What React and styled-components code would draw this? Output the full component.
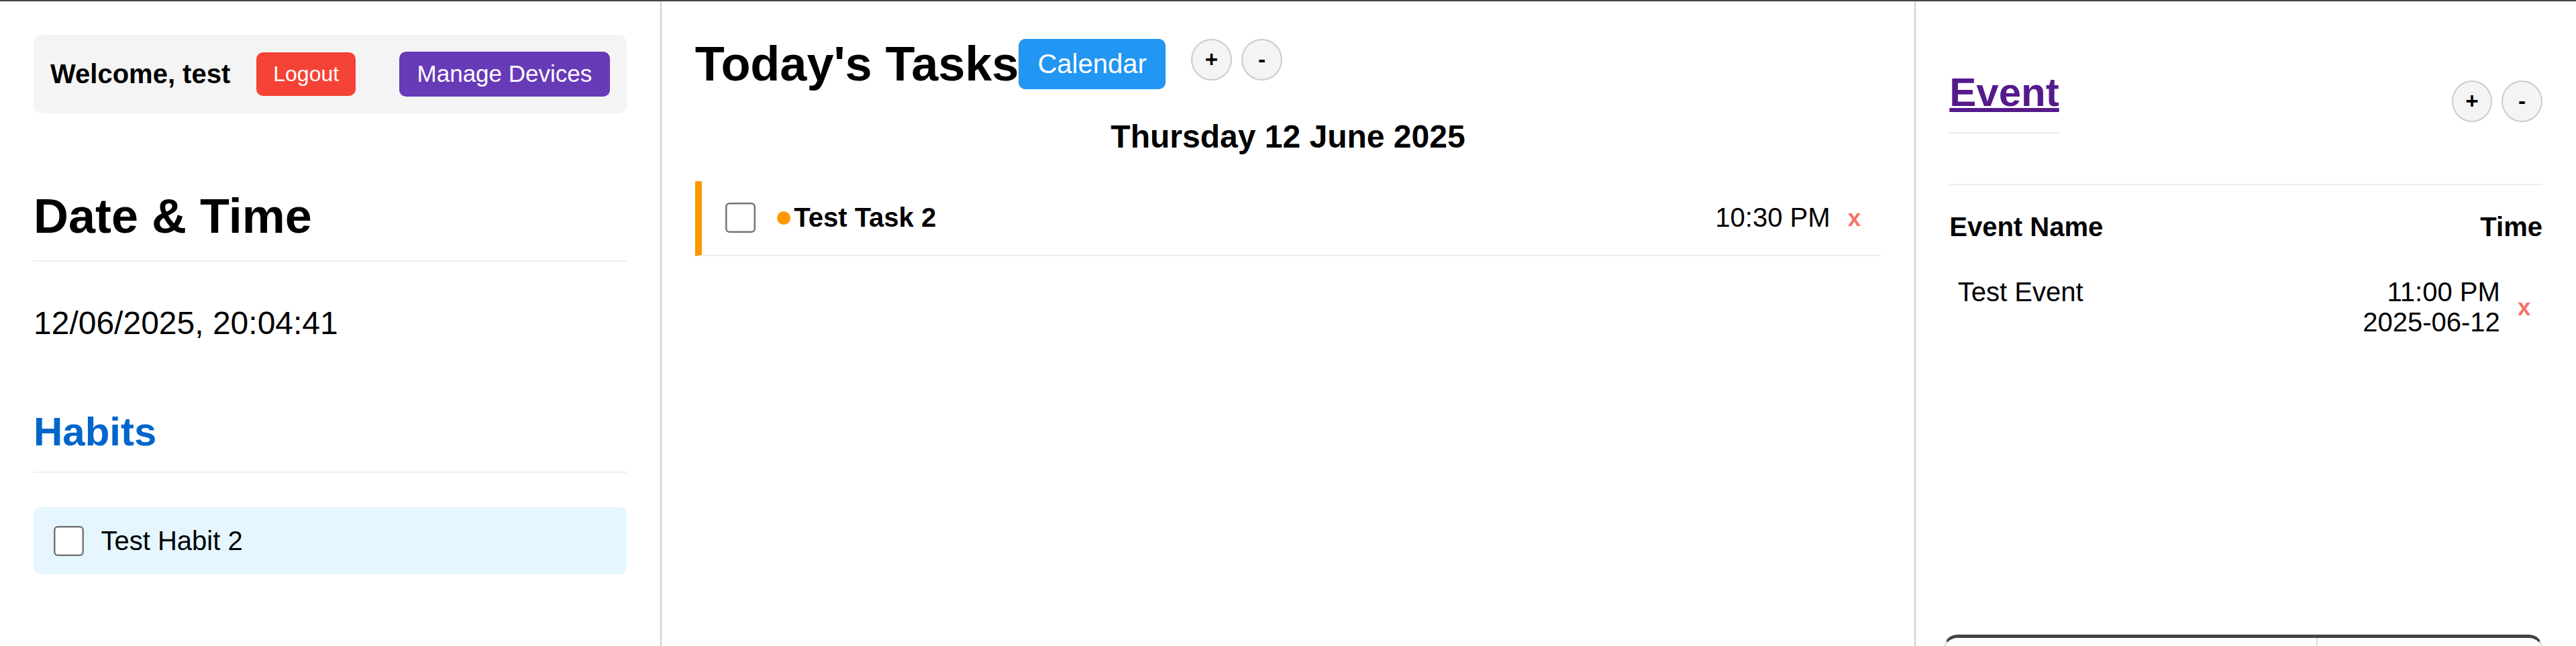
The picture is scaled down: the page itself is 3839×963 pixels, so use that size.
import React from "react";
import styled, { createGlobalStyle } from "styled-components";

const Global = createGlobalStyle`
  html, body {
    margin: 0;
    padding: 0;
    background: #fff;
    overflow: hidden;
  }
`;

const FONT = `"Liberation Sans", Arial, Helvetica, sans-serif`;

const Page = styled.div`
  zoom: 2.5;
  width: 1535.6px;
  height: 385.2px;
  box-sizing: border-box;
  border-top: 1px solid #444;
  display: flex;
  font-family: ${FONT};
  color: #000;
  background: #fff;
  overflow: hidden;
`;

const Panel = styled.section`
  flex: ${(p) => p.$grow} 1 0;
  min-width: 0;
  padding: 20px;
  display: flex;
  flex-direction: column;
  border-right: ${(p) => (p.$divider ? "1px solid #ccc" : "none")};
  & > * {
    flex-shrink: 0;
  }
`;

const UserBar = styled.div`
  display: flex;
  align-items: center;
  padding: 10px;
  background: #f4f4f4;
  border-radius: 5px;
`;

const Welcome = styled.span`
  font-size: 16px;
  font-weight: bold;
`;

const Button = styled.button`
  font-family: inherit;
  border: none;
  color: #fff;
  cursor: pointer;
  border-radius: 4px;
  line-height: normal;
  background: ${(p) => p.$bg};
  font-size: ${(p) => p.$size}px;
  padding: ${(p) => p.$pad};
  margin-left: ${(p) => p.$ml || "0"};
`;

const SectionTitle = styled.h2`
  margin: ${(p) => p.$m};
  padding-bottom: 10px;
  border-bottom: 1px solid #eee;
  font-size: ${(p) => p.$size}px;
  color: ${(p) => p.$color || "#000"};
  font-weight: bold;
  line-height: normal;
`;

const Clock = styled.div`
  font-size: 19.2px;
  line-height: normal;
`;

const HabitItem = styled.label`
  display: flex;
  align-items: center;
  padding: 8px;
  background: #e5f6fe;
  border-radius: 4px;
`;

const Checkbox = styled.input.attrs({ type: "checkbox" })`
  width: 18px;
  height: 18px;
  margin: 3px 3px 3px 4px;
  flex: none;
`;

const HabitName = styled.span`
  font-size: 16px;
  margin-left: 7.2px;
`;

const TaskHeader = styled.div`
  display: flex;
  align-items: center;
  margin-top: 0.8px;
`;

const TasksTitle = styled.h2`
  margin: 0;
  font-size: 28.8px;
  font-weight: bold;
  line-height: normal;
`;

const ZoomGroup = styled.div`
  display: flex;
  gap: ${(p) => p.$gap}px;
  margin-left: ${(p) => p.$ml || "0"};
  margin-bottom: ${(p) => p.$mb || "0"};
`;

const RoundButton = styled.button`
  box-sizing: border-box;
  width: 24.3px;
  height: 24.8px;
  padding: 0;
  border-radius: 50%;
  border: 1px solid #ccc;
  background: #f4f4f4;
  color: #000;
  font-family: inherit;
  font-size: 13.3px;
  font-weight: bold;
  line-height: 1;
  display: flex;
  align-items: center;
  justify-content: center;
  cursor: pointer;
`;

const DayTitle = styled.h3`
  margin: 16.1px 0 0;
  font-size: 19.2px;
  font-weight: bold;
  text-align: center;
  line-height: normal;
`;

const TaskList = styled.div`
  margin-top: 15.4px;
`;

const TaskItem = styled.div`
  display: flex;
  align-items: center;
  padding: 10px;
  border-left: 4px solid ${(p) => p.$accent};
  border-bottom: 1px solid #eee;
`;

const TaskDot = styled.span`
  width: 8px;
  height: 8px;
  border-radius: 50%;
  background: ${(p) => p.$accent};
  margin: 0 2px 0 10px;
  flex: none;
`;

const TaskTitle = styled.span`
  font-size: 16px;
  font-weight: bold;
`;

const TaskTime = styled.span`
  margin-left: auto;
  font-size: 16px;
`;

const DeleteButton = styled.button`
  background: none;
  border: none;
  padding: 0 2px;
  margin-left: 8.5px;
  color: #f6736b;
  font-family: inherit;
  font-size: 14px;
  font-weight: bold;
  line-height: normal;
  cursor: pointer;
`;

const EventHeader = styled.div`
  display: flex;
  justify-content: space-between;
  align-items: center;
  padding-bottom: 10px;
  border-bottom: 1px solid #eee;
`;

const EventTitle = styled.h2`
  margin: 20.2px 0;
  padding-bottom: 10px;
  border-bottom: 1px solid #eee;
  font-size: 24px;
  font-weight: bold;
  line-height: normal;
`;

const EventLink = styled.a`
  color: #551a8b;
  text-decoration: underline;
`;

const EventColumns = styled.div`
  display: flex;
  justify-content: space-between;
  padding: 16px 0 9.8px;
  font-size: 16px;
  font-weight: bold;
  line-height: normal;
`;

const EventRow = styled.div`
  display: flex;
  justify-content: space-between;
  align-items: flex-start;
  padding: 10.8px 5px 10px;
`;

const EventName = styled.span`
  font-size: 16px;
  line-height: normal;
`;

const EventWhen = styled.div`
  display: flex;
  align-items: center;
`;

const EventTimes = styled.div`
  text-align: right;
  font-size: 16px;
  line-height: normal;
`;

const MiniCalendar = styled.div`
  margin: 167.3px 0 0 -3.4px;
  height: 40px;
  display: grid;
  grid-template-columns: 222px 1fr;
  border: 1px solid #ddd;
  border-top: 2px solid #444;
  border-radius: 8px 8px 0 0;
`;

const MiniCell = styled.div`
  border-right: ${(p) => (p.$divider ? "1px solid #ddd" : "none")};
`;

export default function App() {
  return (
    <>
      <Global />
      <Page>
        <Panel $grow={1} $divider>
          <UserBar>
            <Welcome>Welcome, test</Welcome>
            <Button $bg="#f44336" $size={12.8} $pad="5.45px 10px" $ml="15.6px">
              Logout
            </Button>
            <Button $bg="#673ab7" $size={14} $pad="5.35px 10.6px" $ml="auto">
              Manage Devices
            </Button>
          </UserBar>
          <SectionTitle $size={28.8} $m="45px 0 25.45px">
            Date &amp; Time
          </SectionTitle>
          <Clock>12/06/2025, 20:04:41</Clock>
          <SectionTitle $size={24} $color="#0066cc" $m="39.9px 0 20.6px">
            Habits
          </SectionTitle>
          <HabitItem>
            <Checkbox />
            <HabitName>Test Habit 2</HabitName>
          </HabitItem>
        </Panel>

        <Panel $grow={2} $divider>
          <TaskHeader>
            <TasksTitle>Today's Tasks</TasksTitle>
            <Button $bg="#2196f3" $size={16} $pad="6px 11.2px">
              Calendar
            </Button>
            <ZoomGroup $gap={5.8} $ml="15.3px" $mb="5.2px">
              <RoundButton>+</RoundButton>
              <RoundButton>-</RoundButton>
            </ZoomGroup>
          </TaskHeader>
          <DayTitle>Thursday 12 June 2025</DayTitle>
          <TaskList>
            <TaskItem $accent="#ff9800">
              <Checkbox />
              <TaskDot $accent="#ff9800" />
              <TaskTitle>Test Task 2</TaskTitle>
              <TaskTime>10:30 PM</TaskTime>
              <DeleteButton>x</DeleteButton>
            </TaskItem>
          </TaskList>
        </Panel>

        <Panel $grow={1}>
          <EventHeader>
            <EventTitle>
              <EventLink href="#">Event</EventLink>
            </EventTitle>
            <ZoomGroup $gap={5.6}>
              <RoundButton>+</RoundButton>
              <RoundButton>-</RoundButton>
            </ZoomGroup>
          </EventHeader>
          <EventColumns>
            <span>Event Name</span>
            <span>Time</span>
          </EventColumns>
          <EventRow>
            <EventName>Test Event</EventName>
            <EventWhen>
              <EventTimes>
                11:00 PM
                <br />
                2025-06-12
              </EventTimes>
              <DeleteButton>x</DeleteButton>
            </EventWhen>
          </EventRow>
          <MiniCalendar>
            <MiniCell $divider />
            <MiniCell />
          </MiniCalendar>
        </Panel>
      </Page>
    </>
  );
}
